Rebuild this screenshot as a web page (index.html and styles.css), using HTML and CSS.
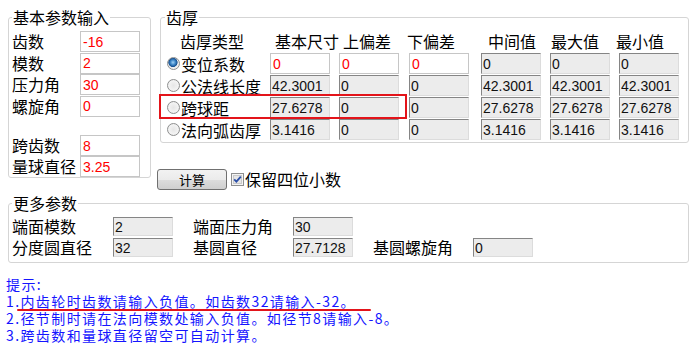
FILE: index.html
```html
<!DOCTYPE html>
<html lang="zh-CN">
<head>
  <meta charset="UTF-8">
  <title>齿厚计算</title>
  <link rel="stylesheet" href="styles.css">
</head>
<body>
<div class="page">

<div class="top">
  <fieldset class="box basic">
    <legend>基本参数输入</legend>
    <div class="form">
      <label>齿数</label><input class="edit" value="-16">
      <label>模数</label><input class="edit" value="2">
      <label>压力角</label><input class="edit" value="30">
      <label>螺旋角</label><input class="edit" value="0">
    </div>
    <div class="form second">
      <label>跨齿数</label><input class="edit" value="8">
      <label>量球直径</label><input class="edit" value="3.25">
    </div>
  </fieldset>

  <div class="right">
    <fieldset class="box thick">
      <legend>齿厚</legend>
      <div class="table">
        <div class="th">齿厚类型</div>
        <div class="th">基本尺寸</div>
        <div class="th">上偏差</div>
        <div class="th">下偏差</div>
        <div class="th">中间值</div>
        <div class="th">最大值</div>
        <div class="th">最小值</div>

        <div class="opt"><span class="radio on"></span>变位系数</div>
        <input class="edit" value="0">
        <input class="edit" value="0">
        <input class="edit" value="0">
        <input class="ro" value="0" readonly>
        <input class="ro" value="0" readonly>
        <input class="ro" value="0" readonly>

        <div class="opt"><span class="radio"></span>公法线长度</div>
        <input class="ro" value="42.3001" readonly>
        <input class="ro" value="0" readonly>
        <input class="ro" value="0" readonly>
        <input class="ro" value="42.3001" readonly>
        <input class="ro" value="42.3001" readonly>
        <input class="ro" value="42.3001" readonly>

        <div class="opt"><span class="radio"></span>跨球距</div>
        <input class="ro" value="27.6278" readonly>
        <input class="ro" value="0" readonly>
        <input class="ro" value="0" readonly>
        <input class="ro" value="27.6278" readonly>
        <input class="ro" value="27.6278" readonly>
        <input class="ro" value="27.6278" readonly>

        <div class="opt"><span class="radio"></span>法向弧齿厚</div>
        <input class="ro" value="3.1416" readonly>
        <input class="ro" value="0" readonly>
        <input class="ro" value="0" readonly>
        <input class="ro" value="3.1416" readonly>
        <input class="ro" value="3.1416" readonly>
        <input class="ro" value="3.1416" readonly>
      </div>
    </fieldset>

    <div class="actions">
      <button type="button">计算</button>
      <label class="check">
        <svg class="checkbox" width="13" height="13" viewBox="0 0 13 13">
          <rect x="0.5" y="0.5" width="12" height="12" fill="#f4f4f4" stroke="#8e8f8f"/>
          <rect x="2.5" y="2.5" width="8" height="8" fill="#e6e6e6" stroke="#c9c9c9"/>
          <path d="M3.2 6.3 L5.4 8.6 L9.8 3.6" fill="none" stroke="#2b4fa8" stroke-width="1.8"/>
        </svg>保留四位小数
      </label>
    </div>
  </div>
</div>

<fieldset class="box more">
  <legend>更多参数</legend>
  <div class="extra">
    <label>端面模数</label><input class="ro" value="2" readonly>
    <label>端面压力角</label><input class="ro" value="30" readonly>
    <span></span><span></span>
    <label>分度圆直径</label><input class="ro" value="32" readonly>
    <label>基圆直径</label><input class="ro" value="27.7128" readonly>
    <label>基圆螺旋角</label><input class="ro" value="0" readonly>
  </div>
</fieldset>

<div class="tips">
  <p>提示:</p>
  <p>1.内齿轮时齿数请输入负值。如齿数32请输入-32。</p>
  <p>2.径节制时请在法向模数处输入负值。如径节8请输入-8。</p>
  <p>3.跨齿数和量球直径留空可自动计算。</p>
</div>

<div class="mark-box"></div>
<div class="mark-line"></div>

</div>
</body>
</html>
```

FILE: styles.css
```css
body {
  margin: 0;
  background: #fff;
  color: #000;
  font-family: "Noto Sans CJK SC", sans-serif;
  font-size: 16px;
}
.page {
  position: relative;
  width: 697px;
  height: 352px;
  overflow: hidden;
}
.top {
  display: flex;
  align-items: flex-start;
  padding-top: 6px;
}

/* group boxes */
.box {
  box-sizing: border-box;
  margin: 0;
  min-width: 0;
  border: 1px solid #d5d5d5;
  border-radius: 3px;
}
.box legend {
  padding: 0 1px;
  font-size: 16px;
  line-height: 22px;
}
.basic {
  width: 143px;
  margin-left: 8px;
  padding: 3px 3px 0;
}
.right {
  margin-left: 6px;
}
.thick {
  width: 529px;
  margin-left: 3px;
  padding: 2px 4px 1px;
}
.more {
  width: 681px;
  margin: 2px 0 0 8px;
  padding: 2px 3px 4px;
}

/* inputs */
input {
  box-sizing: border-box;
  margin: 0;
  font-family: "Liberation Sans", Arial, sans-serif;
  font-size: 14px;
  outline: none;
}
.edit {
  width: 60px;
  height: 21px;
  padding: 0 2px;
  border: 1px solid #c6c6c6;
  background: #fff;
  color: #ff0000;
}
.ro {
  width: 60px;
  height: 21px;
  padding: 0 1px;
  border: 1px solid;
  border-color: #858585 #dcdcdc #dcdcdc #858585;
  background: #ececec;
  color: #111;
}

/* basic params */
.form {
  display: grid;
  grid-template-columns: 68px 60px;
  grid-auto-rows: 21.5px;
}
.form label {
  line-height: 21px;
}
.form.second {
  margin-top: 18px;
  grid-auto-rows: 21px;
}

/* tooth thickness table */
.table {
  display: grid;
  grid-template-columns: 105px 69px 70px 72px 69px 69px 60px;
  grid-template-rows: 23px repeat(4, 22px);
}
.th {
  line-height: 22px;
  white-space: nowrap;
}
.th:nth-child(1) { padding-left: 15px; }
.th:nth-child(2) { padding-left: 5px; }
.th:nth-child(3) { padding-left: 4px; }
.th:nth-child(4) { margin-left: -2px; }
.th:nth-child(5) { padding-left: 7px; }
.th:nth-child(6) { padding-left: 1px; }
.th:nth-child(7) { margin-left: -3px; }
.opt {
  display: flex;
  align-items: center;
  height: 21px;
  white-space: nowrap;
}
.radio {
  box-sizing: border-box;
  width: 13px;
  height: 13px;
  margin: 0 1px 0 2px;
  border: 1px solid #8e8f8f;
  border-radius: 50%;
  background: radial-gradient(circle at 50% 50%, #e6e6e6 0, #f3f3f3 60%, #dedede 100%);
}
.radio.on {
  background: radial-gradient(circle at 45% 40%, #9fd0f5 0, #3e86c6 28%, #164f8f 48%, #ececec 55%, #f5f5f5 100%);
}

/* calculate row */
.actions {
  display: flex;
  align-items: center;
  margin-top: 26px;
  height: 21px;
}
button {
  width: 70px;
  height: 21px;
  padding: 0;
  border: 1px solid #707070;
  border-radius: 3px;
  background: linear-gradient(#f2f2f2 0%, #ebebeb 50%, #dddddd 51%, #cfcfcf 100%);
  font-family: "Noto Sans CJK SC", sans-serif;
  font-size: 13px;
  color: #000;
}
.check {
  display: flex;
  align-items: center;
  margin-left: 4px;
  line-height: 21px;
}
.checkbox {
  margin-right: 1px;
}

/* more params */
.extra {
  display: grid;
  grid-template-columns: 101px 80px 100px 80px 100px 60px;
  grid-auto-rows: 21px;
  align-items: center;
}
.extra label {
  line-height: 21px;
  white-space: nowrap;
}
.extra .ro {
  height: 19px;
}

/* tips */
.tips {
  margin: 13px 0 0 6px;
  color: #1414ff;
  font-size: 14px;
  line-height: 17px;
  letter-spacing: 1.4px;
}
.tips p {
  margin: 0;
  white-space: nowrap;
}

/* red annotations drawn over the form */
.mark-box {
  position: absolute;
  left: 159px;
  top: 94px;
  width: 248px;
  height: 25px;
  box-sizing: border-box;
  border: 2px solid #e3141a;
}
.mark-line {
  position: absolute;
  left: 17px;
  top: 309px;
  width: 354px;
  height: 2px;
  border-radius: 1px;
  background: #e3141a;
}
```
